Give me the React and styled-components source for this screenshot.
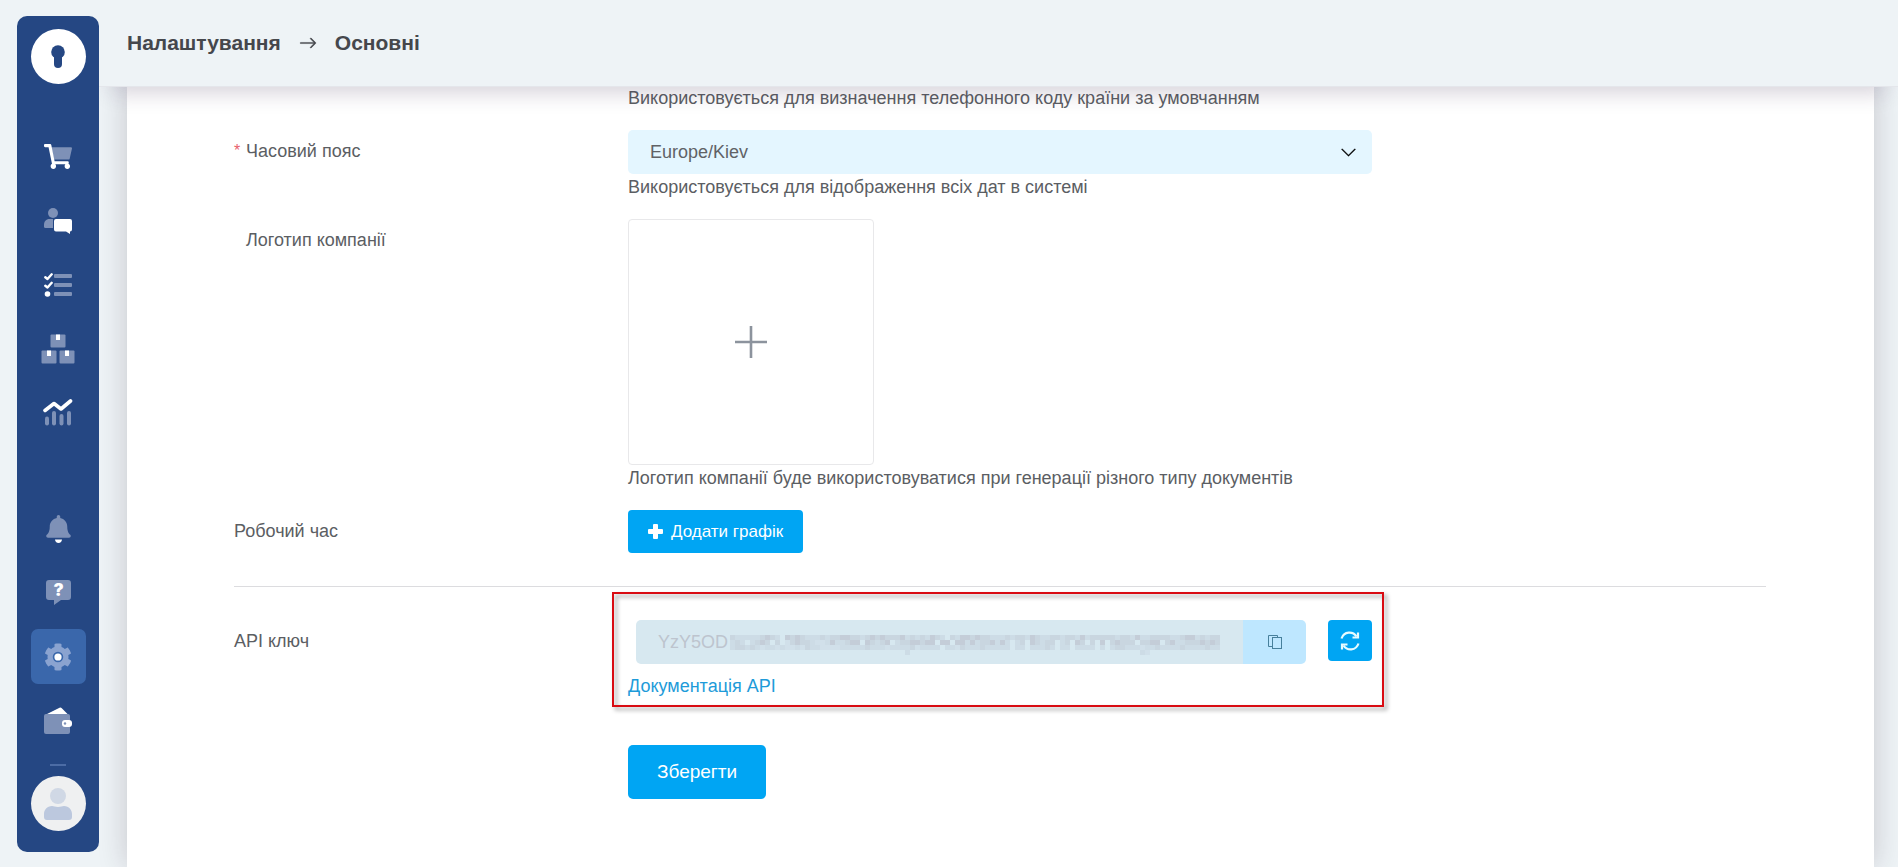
import React from 'react'
import styled, { createGlobalStyle, css } from 'styled-components'
import { BsArrowRight, BsChevronDown } from 'react-icons/bs'

const GlobalStyle = createGlobalStyle`
    :root {
        --mainBg: #eef3f6;
        --mainBlue: #00a5f3;
        --navy: #254783;
        --text: #5b5e63;
        --muted: #7e91b7;
    }
    * {
        box-sizing: border-box;
    }
    body {
        margin: 0;
        background: var(--mainBg);
        color: var(--text);
        font-family: "Liberation Sans", Arial, sans-serif;
        font-size: 18px;
    }
`

/* icons of the side menu */

const CartIcon = () => (
    <svg width="28" height="25" viewBox="0 0 576 512">
        <path fill="var(--muted)" d="M150 64H552c15.400 0 26.800 14.300 23.400 29.300L528 301.300c-2.500 11-12.200 18.700-23.400 18.700H203z" />
        <path fill="#fff" d="M126.500 0H24C10.700 0 0 10.700 0 24v16c0 13.300 10.700 24 24 24h69.900l70.200 343.400C147.300 417.100 136 435.200 136 456c0 30.900 25.100 56 56 56s56-25.100 56-56c0-15.700-6.400-29.800-16.800-40h209.600C430.400 426.200 424 440.300 424 456c0 30.900 25.100 56 56 56s56-25.100 56-56c0-22.200-12.900-41.300-31.600-50.400l5.500-24.300c3.400-15-8-29.300-23.400-29.300H218.100L150 19.200C147.800 8 137.900 0 126.500 0z" />
    </svg>
)

const ChatIcon = () => (
    <svg width="28" height="26" viewBox="0 0 28 26">
        <g fill="var(--muted)">
            <circle cx="9" cy="5" r="5" />
            <path d="M9 20H1.500A1.500 1.500 0 0 1 0 18.500V17c0-3.500 2-6 5.500-6H9z" />
        </g>
        <path fill="#fff" d="M12 11h14a2 2 0 0 1 2 2v8.500a2 2 0 0 1-2 2v2.500l-4-2.500H12a2 2 0 0 1-2-2V13a2 2 0 0 1 2-2z" />
    </svg>
)

const TasksIcon = () => (
    <svg width="28" height="24" viewBox="0 0 28 24">
        <g fill="var(--muted)">
            <rect x="10" y="1" width="18" height="4" rx="1" />
            <rect x="10" y="10" width="18" height="4" rx="1" />
            <rect x="10" y="19" width="18" height="4" rx="1" />
        </g>
        <path fill="none" stroke="#fff" strokeWidth="2.400" strokeLinecap="round" strokeLinejoin="round" d="M1.300 4.200 3.500 6 7.700 1.300M1.300 12.700 3.500 14.500 7.700 9.800" />
        <circle cx="3.500" cy="21" r="2.800" fill="#fff" />
    </svg>
)

const BoxesIcon = () => (
    <svg width="34" height="30" viewBox="0 0 34 30">
        <g fill="var(--muted)">
            <rect x="9.500" y="0.500" width="15" height="13" rx="1" />
            <rect x="0.500" y="16.500" width="15" height="13" rx="1" />
            <rect x="18.500" y="16.500" width="15" height="13" rx="1" />
        </g>
        <path fill="#fff" d="M15 .5h4v5.500h-4zM6 16.500h4V22H6zM24 16.500h4V22h-4z" />
    </svg>
)

const ChartIcon = () => (
    <svg width="30" height="27" viewBox="0 0 30 27">
        <g fill="var(--muted)">
            <rect x="2" y="17.500" width="4" height="9" rx="2" />
            <rect x="9" y="12" width="4" height="14.500" rx="2" />
            <rect x="16.500" y="15" width="4" height="11.500" rx="2" />
            <rect x="24" y="12" width="4" height="14.500" rx="2" />
        </g>
        <path fill="none" stroke="#fff" strokeWidth="3.600" strokeLinecap="round" strokeLinejoin="round" d="M2 11.500 11 4.500 18 10 27.500 2" />
    </svg>
)

const BellIcon = () => (
    <svg width="25" height="28" viewBox="0 0 448 512">
        <path fill="var(--muted)" d="M439.390 362.290c-19.320-20.760-55.470-51.990-55.470-154.290 0-77.700-54.480-139.900-127.940-155.160V32c0-17.670-14.320-32-31.980-32s-31.980 14.330-31.980 32v20.840C118.560 68.100 64.080 130.300 64.080 208c0 102.300-36.150 133.530-55.470 154.290-6 6.450-8.660 14.160-8.610 21.710.11 16.400 12.980 32 32.100 32h383.800c19.120 0 32-15.600 32.100-32 .05-7.550-2.610-15.270-8.610-21.710z" />
        <path fill="#fff" d="M224 512c35.320 0 63.970-28.650 63.970-64H160.030c0 35.350 28.650 64 63.970 64z" />
    </svg>
)

const HelpIcon = () => (
    <svg width="25" height="25" viewBox="0 0 25 25">
        <path fill="var(--muted)" d="M3 0h19a3 3 0 0 1 3 3v14a3 3 0 0 1-3 3h-7l-7 5v-5H3a3 3 0 0 1-3-3V3a3 3 0 0 1 3-3z" />
        <text x="12.500" y="16" textAnchor="middle" fill="#fff" fontFamily="Inter, sans-serif" fontWeight="900" fontSize="17">?</text>
    </svg>
)

const GearIcon = () => (
    <svg width="28" height="28" viewBox="0 0 512 512">
        <path fill="#8aa3d0" fillRule="evenodd" d="M487.400 315.700l-42.600-24.600c4.300-23.200 4.300-47 0-70.200l42.600-24.600c4.900-2.800 7.100-8.600 5.500-14-11.100-35.600-30-67.800-54.700-94.600-3.800-4.100-10-5.100-14.800-2.300L380.800 110c-17.900-15.400-38.500-27.300-60.800-35.100V25.800c0-5.600-3.900-10.500-9.400-11.700-36.700-8.200-74.300-7.800-109.200 0-5.500 1.200-9.400 6.100-9.400 11.700V75c-22.200 7.900-42.800 19.800-60.800 35.100L88.700 85.500c-4.900-2.800-11-1.900-14.800 2.300-24.700 26.700-43.600 58.900-54.700 94.600-1.700 5.400.6 11.200 5.500 14L67.300 221c-4.300 23.200-4.300 47 0 70.200l-42.600 24.600c-4.900 2.800-7.100 8.600-5.500 14 11.100 35.600 30 67.800 54.700 94.600 3.800 4.100 10 5.100 14.800 2.300l42.600-24.600c17.900 15.400 38.500 27.300 60.800 35.100v49.200c0 5.600 3.900 10.500 9.400 11.700 36.700 8.200 74.300 7.800 109.200 0 5.500-1.200 9.400-6.100 9.400-11.700v-49.200c22.200-7.900 42.800-19.800 60.800-35.100l42.600 24.600c4.900 2.800 11 1.900 14.800-2.300 24.700-26.700 43.600-58.900 54.700-94.600 1.500-5.500-.7-11.300-5.600-14.100zM256 352a96 96 0 1 1 0-192 96 96 0 0 1 0 192z" />
        <circle cx="256" cy="256" r="66" fill="#fff" />
    </svg>
)

const WalletIcon = () => (
    <svg width="28" height="27" viewBox="0 0 28 27">
        <path fill="#fff" d="M3 7 15.500.700a2 2 0 0 1 2.300.500L23.500 7z" />
        <path fill="var(--muted)" d="M2 7h22a2 2 0 0 1 2 2v16a2 2 0 0 1-2 2H2a2 2 0 0 1-2-2V9a2 2 0 0 1 2-2z" />
        <rect x="18" y="13" width="10" height="7" rx="3" fill="#fff" />
        <circle cx="21" cy="16.500" r="1.200" fill="var(--muted)" />
    </svg>
)

const KeyholeIcon = () => (
    <svg width="14" height="23" viewBox="0 0 14 23">
        <circle cx="7" cy="7" r="6.800" fill="var(--navy)" />
        <path fill="var(--navy)" d="M3 10h8v9a4 4 0 0 1-8 0z" />
    </svg>
)

const PersonIcon = () => (
    <svg width="28" height="32" viewBox="0 0 28 32">
        <circle cx="14" cy="8" r="8" fill="#d0d8e5" />
        <path fill="#bcc8de" d="M8 18c2 0 3 1 6 1s4-1 6-1c5 0 8 4 8 8v3a3 3 0 0 1-3 3H3a3 3 0 0 1-3-3v-3c0-4 3-8 8-8z" />
    </svg>
)

/* icons of the form */

const PlusIcon = () => (
    <svg width="15" height="15" viewBox="0 0 15 15">
        <path fill="#fff" d="M6 0h3a1 1 0 0 1 1 1v4h4a1 1 0 0 1 1 1v3a1 1 0 0 1-1 1h-4v4a1 1 0 0 1-1 1H6a1 1 0 0 1-1-1v-4H1a1 1 0 0 1-1-1V6a1 1 0 0 1 1-1h4V1a1 1 0 0 1 1-1z" />
    </svg>
)

const UploadIcon = () => (
    <svg width="32" height="32" viewBox="0 0 32 32">
        <path stroke="#8c939d" strokeWidth="2.600" d="M16 0v32M0 16h32" />
    </svg>
)

const CopyIcon = () => (
    <svg width="14" height="14" viewBox="0 0 14 14" fill="none" stroke="#47809c">
        <path d="M9.500 2.500v-2h-9v11h4" />
        <rect x="4.500" y="2.500" width="9" height="11" />
    </svg>
)

const RefreshIcon = () => (
    <svg width="20" height="20" viewBox="0 0 20 20" fill="none" stroke="#e6fbff" strokeWidth="2.200">
        <path d="M1.500 7.500C4 0 13 0 16.500 5.500M18.500 12.500C16 20 7 20 3.500 14.500" />
        <path d="M18 1.500v5h-5.500M2 18.500v-5h5.500" />
    </svg>
)

/* every digit is the darkness of one square, 0 is empty */
const keyMask = [
    '32222234320434322232334433234343334232324320324434332223233243223323324233333233242233332234423233',
    '23202343030134332112422344043234023344344044044242334242023043233023043030403433303344034223334343',
    '23323212212112132211112222232221222231222202213222322222022022232022022220202332221223222232222322',
    '00000000000000000000000000000000000200000000000000000000000000000000000000000000002100000000000000'
]
const maskColors = ['none', '#d1e0ea', '#cddce6', '#c9d6e0', '#c4cdd8']

const KeyMask = () => (
    <MaskSvg width="490" height="20" viewBox="0 0 490 20" shapeRendering="crispEdges" aria-hidden="true">
        {keyMask.map((line, y) => line.split('').map((n, x) => (
            <rect key={`${x}-${y}`} x={x * 5} y={y * 5} width="5" height="5" fill={maskColors[n]} />
        )))}
    </MaskSvg>
)

const topMenu = [
    { title: 'Замовлення', icon: <CartIcon /> },
    { title: 'Клієнти', icon: <ChatIcon /> },
    { title: 'Завдання', icon: <TasksIcon /> },
    { title: 'Склад', icon: <BoxesIcon /> },
    { title: 'Аналітика', icon: <ChartIcon /> }
]

const bottomMenu = [
    { title: 'Сповіщення', icon: <BellIcon /> },
    { title: 'Допомога', icon: <HelpIcon /> },
    { title: 'Налаштування', icon: <GearIcon />, active: true },
    { title: 'Гаманець', icon: <WalletIcon /> }
]

const Menu = ({ items }) => (
    <MenuContainer>
        {items.map(item => (
            <MenuLink key={item.title} href="#" aria-label={item.title} $active={item.active}>
                {item.icon}
            </MenuLink>
        ))}
    </MenuContainer>
)

export default function App() {
    return (
        <>
            <GlobalStyle />
            <Page>
                <Sidebar>
                    <Round href="#" aria-label="Головна" $bg="#fff">
                        <KeyholeIcon />
                    </Round>
                    <MenuGroups>
                        <Menu items={topMenu} />
                        <Menu items={bottomMenu} />
                    </MenuGroups>
                    <Divider />
                    <Round href="#" aria-label="Профіль" $bg="#eff0f1">
                        <PersonIcon />
                    </Round>
                </Sidebar>
                <Main>
                    <Header>
                        <Crumb>Налаштування</Crumb>
                        <BsArrowRight size={18} />
                        <Crumb>Основні</Crumb>
                    </Header>
                    <Card>
                        <FormRow>
                            <Field>
                                <Hint>Використовується для визначення телефонного коду країни за умовчанням</Hint>
                            </Field>
                        </FormRow>
                        <FormRow>
                            <Label htmlFor="timezone" $indent>
                                <Star>*</Star>Часовий пояс
                            </Label>
                            <Field>
                                <SelectBox>
                                    <Select id="timezone" defaultValue="Europe/Kiev">
                                        <option>Europe/Kiev</option>
                                    </Select>
                                    <BsChevronDown size={17} />
                                </SelectBox>
                                <Hint>Використовується для відображення всіх дат в системі</Hint>
                            </Field>
                        </FormRow>
                        <FormRow>
                            <Label as="span" $indent>Логотип компанії</Label>
                            <Field>
                                <Upload type="button" aria-label="Логотип компанії">
                                    <UploadIcon />
                                </Upload>
                                <Hint>Логотип компанії буде використовуватися при генерації різного типу документів</Hint>
                            </Field>
                        </FormRow>
                        <FormRow>
                            <Label as="span">Робочий час</Label>
                            <Field>
                                <Button type="button">
                                    <PlusIcon />
                                    Додати графік
                                </Button>
                            </Field>
                        </FormRow>
                        <Line />
                        <FormRow>
                            <Label htmlFor="apiKey">API ключ</Label>
                            <ApiField>
                                <KeyRow>
                                    <KeyGroup>
                                        <KeyInput id="apiKey" defaultValue="YzY5OD" disabled />
                                        <KeyMask />
                                        <CopyButton type="button" aria-label="Копіювати">
                                            <CopyIcon />
                                        </CopyButton>
                                    </KeyGroup>
                                    <RefreshButton type="button" aria-label="Оновити">
                                        <RefreshIcon />
                                    </RefreshButton>
                                </KeyRow>
                                <DocsLink href="#">Документація API</DocsLink>
                                <Highlight />
                            </ApiField>
                        </FormRow>
                        <SaveRow>
                            <Field>
                                <Button type="submit" $big>Зберегти</Button>
                            </Field>
                        </SaveRow>
                    </Card>
                </Main>
            </Page>
        </>
    )
}

const center = css`
    display: flex;
    align-items: center;
    justify-content: center;
`

const Page = styled.div`
    display: flex;
    min-height: 100vh;
    padding-left: 17px;
`

const Sidebar = styled.aside`
    position: sticky;
    top: 16px;
    z-index: 3;
    display: flex;
    flex-direction: column;
    align-items: center;
    flex: none;
    width: 82px;
    height: calc(100vh - 31px);
    margin-top: 16px;
    padding: 13px 0 21px;
    border-radius: 10px;
    background: var(--navy);
`

const Round = styled.a`
    ${center}
    flex: none;
    width: 55px;
    height: 55px;
    border-radius: 50%;
    background: ${props => props.$bg};
`

const MenuGroups = styled.div`
    display: flex;
    flex-direction: column;
    justify-content: space-between;
    flex: 1;
    padding: 45px 0 16px;
`

const MenuContainer = styled.nav`
    display: flex;
    flex-direction: column;
    gap: 9px;
`

const MenuLink = styled.a`
    ${center}
    width: 55px;
    height: 55px;
    border-radius: 7px;
    background: ${props => props.$active ? '#3a67ab' : 'transparent'};
`

const Divider = styled.div`
    width: 16px;
    height: 2px;
    margin-bottom: 10px;
    background: #4c6ca5;
`

const Main = styled.main`
    display: flex;
    flex-direction: column;
    flex: 1;
    min-width: 0;
`

const Header = styled.header`
    position: sticky;
    top: 0;
    z-index: 2;
    display: flex;
    align-items: center;
    gap: 18px;
    height: 87px;
    padding: 0 28px;
    border-bottom: 1px solid #e4e6eb;
    background: var(--mainBg);
    box-shadow: 0 18px 20px -12px rgba(50, 30, 70, 0.2);
    color: #45474c;
    svg {
        stroke: currentColor;
        stroke-width: 0.4;
    }
`

const Crumb = styled.span`
    font-size: 21px;
    font-weight: bold;
`

const Card = styled.form`
    flex: 1;
    margin: 0 24px 0 28px;
    padding: 0 108px 40px 107px;
    background: #fff;
    box-shadow: 0 0 28px rgba(40, 20, 40, 0.2);
`

const FormRow = styled.div`
    display: grid;
    grid-template-columns: 394fr 744fr 394fr;
    margin-bottom: 21px;
`

const SaveRow = styled(FormRow)`
    margin: 48px 0 0;
`

const Field = styled.div`
    display: flex;
    flex-direction: column;
    align-items: flex-start;
    grid-column: 2;
    gap: 2px;
`

const Label = styled.label`
    display: flex;
    align-items: flex-start;
    padding-top: 10px;
    padding-left: ${props => props.$indent ? '12px' : '0'};
    line-height: 22px;
`

const Star = styled.span`
    width: 12px;
    margin-left: -12px;
    color: #e8606c;
    font-size: 16px;
`

const Hint = styled.div`
    line-height: 22px;
`

const SelectBox = styled.div`
    position: relative;
    width: 100%;
    svg {
        position: absolute;
        top: 14px;
        right: 15px;
        color: #000;
        stroke: #000;
        stroke-width: 0.3;
        pointer-events: none;
    }
`

const Select = styled.select`
    display: block;
    width: 100%;
    height: 44px;
    padding: 0 40px 0 22px;
    border: 0;
    border-radius: 5px;
    background: #e4f6ff;
    color: #606266;
    font: inherit;
    appearance: none;
`

const Upload = styled.button`
    ${center}
    width: 246px;
    height: 246px;
    border: 1px solid #e8e8ea;
    border-radius: 4px;
    background: #fff;
`

const Button = styled.button`
    ${center}
    gap: 8px;
    height: ${props => props.$big ? '54px' : '43px'};
    padding: ${props => props.$big ? '0 29px' : '0 20px'};
    border: 0;
    border-radius: ${props => props.$big ? '5px' : '4px'};
    background: var(--mainBlue);
    color: #fff;
    font-family: inherit;
    font-size: ${props => props.$big ? '19px' : '17px'};
`

const Line = styled.hr`
    height: 1px;
    margin: 33px 0;
    border: 0;
    background: #dcdcdf;
`

const ApiField = styled(Field)`
    position: relative;
    gap: 11px;
`

const KeyRow = styled.div`
    display: flex;
    align-items: flex-start;
    gap: 22px;
    width: 100%;
    padding-left: 8px;
`

const KeyGroup = styled.div`
    position: relative;
    display: flex;
    flex: 1;
    height: 44px;
    border-radius: 5px;
    overflow: hidden;
`

const KeyInput = styled.input`
    flex: 1;
    min-width: 0;
    padding: 0 22px;
    border: 0;
    background: #d7e8f0;
    color: #bdc4ce;
    font: inherit;
`

const MaskSvg = styled.svg`
    position: absolute;
    top: 15px;
    left: 94px;
`

const CopyButton = styled.button`
    ${center}
    width: 63px;
    border: 0;
    background: #bee7ff;
`

const RefreshButton = styled.button`
    ${center}
    width: 44px;
    height: 41px;
    padding: 0;
    border: 0;
    border-radius: 4px;
    background: var(--mainBlue);
`

const DocsLink = styled.a`
    color: #1e9bd9;
    line-height: 22px;
    text-decoration: none;
`

/* red frame drawn over the key field */
const Highlight = styled.div`
    position: absolute;
    top: -28px;
    right: -12px;
    bottom: -10px;
    left: -16px;
    border: 2px solid #d90b12;
    filter: drop-shadow(3px 3px 2px rgba(0, 0, 0, 0.4));
    pointer-events: none;
`
